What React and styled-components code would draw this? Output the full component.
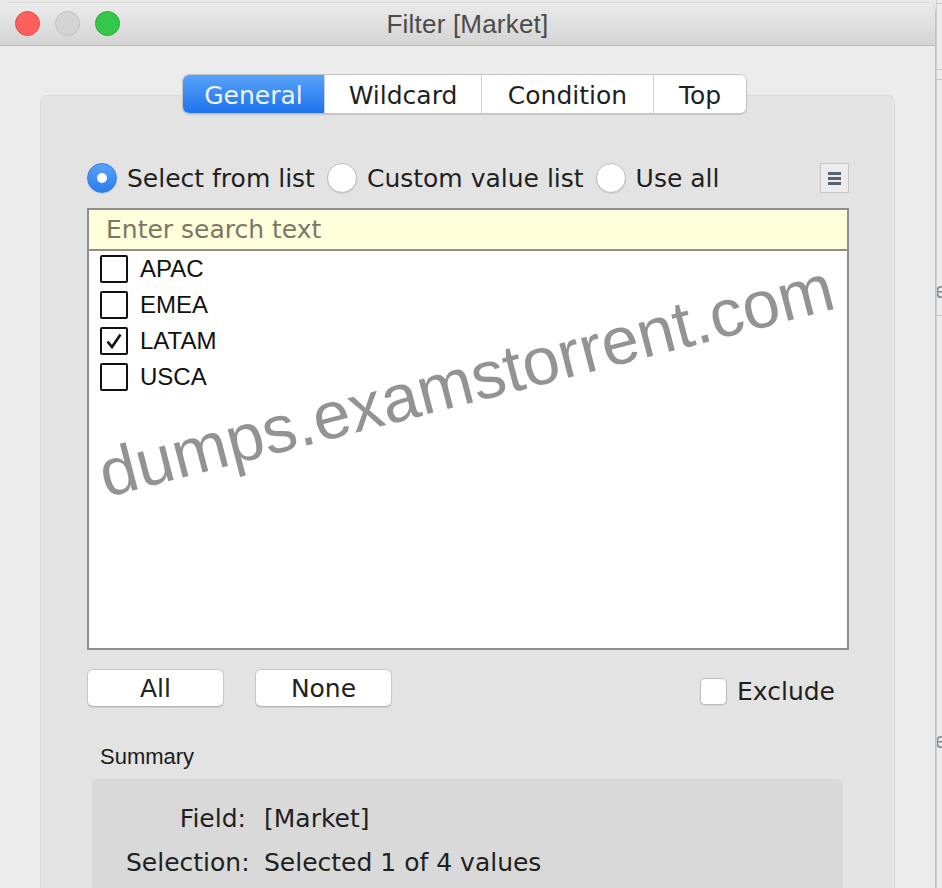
import React, { useState } from 'react';
import styled, { createGlobalStyle } from 'styled-components';

const UI_FONT = '"DejaVu Sans", "Liberation Sans", sans-serif';
const LIST_FONT = '"Liberation Sans", Arial, sans-serif';

const GlobalStyle = createGlobalStyle`
  html, body {
    margin: 0;
    padding: 0;
    background: #e9e9e9;
  }
  * {
    box-sizing: border-box;
  }
`;

const Screen = styled.div`
  position: relative;
  display: flex;
  width: 942px;
  height: 888px;
  overflow: hidden;
  background: #e9e9e9;
`;

const Window = styled.div`
  flex: none;
  width: 936px;
  display: flex;
  flex-direction: column;
  border-right: 1px solid #c2c2c2;
  border-top-left-radius: 10px;
  border-top-right-radius: 10px;
  overflow: hidden;
  margin-top: 2px;
`;

const TitleBar = styled.div`
  position: relative;
  height: 44px;
  display: flex;
  align-items: center;
  justify-content: center;
  background: linear-gradient(#ebebeb, #d4d4d4);
  border-bottom: 1px solid #b9b9b9;
  border-top: 1px solid #d9d9d9;
`;

const Lights = styled.div`
  position: absolute;
  left: 15px;
  top: 8px;
  display: flex;
  gap: 15px;
`;

const Light = styled.span`
  width: 25px;
  height: 25px;
  border-radius: 50%;
  background: ${(p) => p.$fill};
  border: 1px solid ${(p) => p.$edge};
`;

const Title = styled.div`
  font-family: ${LIST_FONT};
  font-size: 26px;
  color: #4b4b4b;
  letter-spacing: 0.2px;
`;

const Body = styled.div`
  flex: 1;
  display: flex;
  flex-direction: column;
  background: #ececec;
  padding: 28px 40px 0 40px;
`;

const TabStrip = styled.div`
  align-self: center;
  position: relative;
  z-index: 1;
  display: flex;
  height: 40px;
  margin-bottom: -19px;
  margin-left: -6px;
  background: #fff;
  border: 1px solid #c3c3c3;
  border-radius: 7px;
  box-shadow: 0 1px 1px rgba(0, 0, 0, 0.12);
  overflow: hidden;
`;

const Tab = styled.div`
  width: ${(p) => p.$w}px;
  display: flex;
  align-items: center;
  justify-content: center;
  padding-top: 3px;
  font-family: ${UI_FONT};
  font-size: 25px;
  color: ${(p) => (p.$active ? '#eef5ff' : '#1f1f1f')};
  background: ${(p) => (p.$active ? 'linear-gradient(#59a3fa, #1c72ee)' : '#fff')};
  & + & {
    border-left: 1px solid #cfcfcf;
  }
`;

const Panel = styled.div`
  flex: 1;
  display: flex;
  flex-direction: column;
  background: #e3e3e3;
  border: 1px solid #dadada;
  border-bottom: none;
  border-radius: 8px 8px 0 0;
  padding: 66px 45px 0 46px;
`;

const ModeRow = styled.div`
  display: flex;
  align-items: center;
  height: 32px;
`;

const ModeOption = styled.label`
  display: flex;
  align-items: center;
  gap: 10px;
  margin-right: 12px;
  font-family: ${UI_FONT};
  font-size: 25px;
  color: #1f1f1f;
`;

const Radio = styled.span`
  width: 30px;
  height: 30px;
  border-radius: 50%;
  display: flex;
  align-items: center;
  justify-content: center;
  background: ${(p) => (p.$on ? 'linear-gradient(#5aa1f8, #2b7cef)' : '#fff')};
  border: 1px solid ${(p) => (p.$on ? '#2f7de6' : '#bcbcbc')};
  box-shadow: 0 1px 1px rgba(0, 0, 0, 0.1);
  &::after {
    content: '';
    display: ${(p) => (p.$on ? 'block' : 'none')};
    width: 10px;
    height: 10px;
    border-radius: 50%;
    background: #fff;
  }
`;

const MenuButton = styled.button`
  margin-left: auto;
  width: 29px;
  height: 30px;
  padding: 0;
  display: flex;
  flex-direction: column;
  align-items: center;
  justify-content: center;
  gap: 2px;
  background: #ececec;
  border: 1px solid #c5c5c5;
`;

const MenuBar = styled.span`
  width: 13px;
  height: 3px;
  background: #566070;
`;

const SearchBox = styled.input`
  margin-top: 14px;
  height: 43px;
  width: 100%;
  padding: 0 17px;
  background: #ffffdc;
  border: 2px solid #8d8d92;
  font-family: ${UI_FONT};
  font-size: 25px;
  color: #333;
  outline: none;
  &::placeholder {
    color: #787866;
  }
`;

const ValueList = styled.div`
  height: 401px;
  margin-top: -2px;
  padding: 4px 0 0 11px;
  background: #fff;
  border: 2px solid #8d8d92;
  display: flex;
  flex-direction: column;
`;

const ValueRow = styled.label`
  height: 36px;
  display: flex;
  align-items: flex-start;
  gap: 12px;
  font-family: ${LIST_FONT};
  font-size: 24px;
  color: #111;
  line-height: 28px;
`;

const Box = styled.span`
  width: 28px;
  height: 28px;
  border: 2px solid #111;
  border-radius: 2px;
  display: flex;
  align-items: center;
  justify-content: center;
  background: #fff;
`;

const ActionRow = styled.div`
  display: flex;
  align-items: center;
  margin-top: 19px;
  padding-right: 14px;
`;

const PushButton = styled.button`
  width: 137px;
  height: 38px;
  margin-right: 31px;
  background: #fff;
  border: 1px solid #c8c8c8;
  border-bottom-color: #b4b4b4;
  border-radius: 6px;
  box-shadow: 0 1px 1px rgba(0, 0, 0, 0.08);
  font-family: ${UI_FONT};
  font-size: 25px;
  color: #222;
`;

const ExcludeToggle = styled.label`
  margin-left: auto;
  margin-top: 6px;
  display: flex;
  align-items: center;
  gap: 10px;
  font-family: ${UI_FONT};
  font-size: 25px;
  color: #1f1f1f;
`;

const SoftBox = styled.span`
  width: 27px;
  height: 27px;
  border-radius: 5px;
  background: #fff;
  border: 1px solid #bcbcbc;
  box-shadow: 0 1px 1px rgba(0, 0, 0, 0.08);
`;

const SummaryLabel = styled.div`
  margin: 37px 0 0 13px;
  font-family: ${LIST_FONT};
  font-size: 22px;
  color: #1a1a1a;
`;

const SummaryBox = styled.div`
  flex: 1;
  margin: 9px 6px 0 5px;
  padding: 17px 0 0 34px;
  background: #d9d9d9;
  border-radius: 6px 6px 0 0;
  display: grid;
  grid-template-columns: 120px 1fr;
  column-gap: 18px;
  grid-auto-rows: 44px;
  align-content: start;
  align-items: center;
  font-family: ${UI_FONT};
  font-size: 25px;
  color: #1f1f1f;
`;

const SummaryKey = styled.span`
  text-align: right;
  white-space: nowrap;
`;

const Backdrop = styled.div`
  flex: 1;
  display: flex;
  flex-direction: column;
  background: #ececec;
  border-left: 1px solid #cfcfcf;
  font-family: ${LIST_FONT};
  font-size: 22px;
  color: #8a8a8a;
  overflow: hidden;
`;

const BackdropRule = styled.div`
  height: ${(p) => p.$h}px;
  border-bottom: 1px solid #c9c9c9;
  flex: none;
`;

const BackdropGlyph = styled.div`
  margin: ${(p) => p.$top}px 0 0 -2px;
  line-height: 22px;
`;

const Watermark = styled.div`
  position: absolute;
  left: 466px;
  top: 380px;
  transform: translate(-50%, -50%) rotate(-14.5deg);
  font-family: ${LIST_FONT};
  font-size: 67px;
  color: rgba(120, 120, 120, 0.8);
  white-space: nowrap;
  pointer-events: none;
`;

const tabs = [
  { label: 'General', w: 141 },
  { label: 'Wildcard', w: 157 },
  { label: 'Condition', w: 172 },
  { label: 'Top', w: 93 },
];

const modes = ['Select from list', 'Custom value list', 'Use all'];

const markets = ['APAC', 'EMEA', 'LATAM', 'USCA'];

function Tick() {
  return (
    <svg width="18" height="18" viewBox="0 0 18 18">
      <path d="M2.5 9.5 L7 15 L15.5 2.5" fill="none" stroke="#111" strokeWidth="2.6" />
    </svg>
  );
}

export default function App() {
  const [tab] = useState('General');
  const [mode, setMode] = useState('Select from list');
  const [picked, setPicked] = useState(['LATAM']);

  const toggle = (m) =>
    setPicked((cur) => (cur.includes(m) ? cur.filter((x) => x !== m) : [...cur, m]));

  return (
    <>
      <GlobalStyle />
      <Screen>
        <Window>
          <TitleBar>
            <Lights>
              <Light $fill="#fc605c" $edge="#de4b46" />
              <Light $fill="#d4d4d4" $edge="#bfbfbf" />
              <Light $fill="#34c84a" $edge="#27a83a" />
            </Lights>
            <Title>Filter [Market]</Title>
          </TitleBar>

          <Body>
            <TabStrip>
              {tabs.map((t) => (
                <Tab key={t.label} $w={t.w} $active={t.label === tab}>
                  {t.label}
                </Tab>
              ))}
            </TabStrip>

            <Panel>
              <ModeRow>
                {modes.map((m) => (
                  <ModeOption key={m} onClick={() => setMode(m)}>
                    <Radio $on={mode === m} />
                    {m}
                  </ModeOption>
                ))}
                <MenuButton>
                  <MenuBar />
                  <MenuBar />
                  <MenuBar />
                </MenuButton>
              </ModeRow>

              <SearchBox placeholder="Enter search text" />
              <ValueList>
                {markets.map((m) => (
                  <ValueRow key={m} onClick={() => toggle(m)}>
                    <Box>{picked.includes(m) && <Tick />}</Box>
                    {m}
                  </ValueRow>
                ))}
              </ValueList>

              <ActionRow>
                <PushButton onClick={() => setPicked([...markets])}>All</PushButton>
                <PushButton onClick={() => setPicked([])}>None</PushButton>
                <ExcludeToggle>
                  <SoftBox />
                  Exclude
                </ExcludeToggle>
              </ActionRow>

              <SummaryLabel>Summary</SummaryLabel>
              <SummaryBox>
                <SummaryKey>Field:</SummaryKey>
                <span>[Market]</span>
                <SummaryKey>Selection:</SummaryKey>
                <span>
                  Selected {picked.length} of {markets.length} values
                </span>
              </SummaryBox>
            </Panel>
          </Body>
        </Window>

        <Backdrop>
          <BackdropRule $h={4} />
          <BackdropRule $h={66} />
          <BackdropRule $h={10} />
          <BackdropGlyph $top={200}>e</BackdropGlyph>
          <BackdropRule $h={14} />
          <BackdropGlyph $top={414}>e</BackdropGlyph>
        </Backdrop>

        <Watermark>dumps.examstorrent.com</Watermark>
      </Screen>
    </>
  );
}
